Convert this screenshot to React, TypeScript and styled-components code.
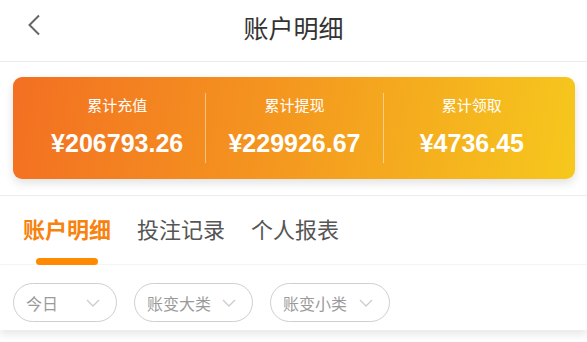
import { createGlobalStyle } from "styled-components";
import styled from "styled-components";

const GlobalStyle = createGlobalStyle`
    html, body {
        margin: 0;
        padding: 0;
        background: #ffffff;
        font-family: "Liberation Sans", "Noto Sans CJK SC", sans-serif;
    }
    * {
        box-sizing: border-box;
    }
`;

const Page = styled.div`
    width: 587px;
    background: #fff;
`;

const TopBar = styled.header`
    position: relative;
    height: 62px;
    display: flex;
    align-items: center;
    justify-content: center;
    border-bottom: 1px solid #ececec;
`;

const BackButton = styled.button`
    position: absolute;
    left: 22px;
    top: 12px;
    width: 24px;
    height: 26px;
    padding: 0;
    border: none;
    background: none;
    display: flex;
    align-items: center;
    justify-content: center;
`;

const Title = styled.h1`
    margin: 0 0 8px;
    font-size: 25px;
    font-weight: 400;
    color: #333;
    font-family: "Noto Sans CJK SC", sans-serif;
`;

const CardSection = styled.section`
    padding: 15px 12px 16px 13px;
    border-bottom: 1px solid #ececec;
`;

const SummaryCard = styled.div`
    display: grid;
    grid-template-columns: repeat(3, 1fr);
    padding: 16px 15px;
    border-radius: 9px;
    background: linear-gradient(100deg, #f36f22 0%, #f4951f 45%, #f6c81d 100%);
    box-shadow: 0 4px 10px rgba(0, 0, 0, 0.12);
`;

const Stat = styled.div<{ $divider?: boolean }>`
    height: 70px;
    display: flex;
    flex-direction: column;
    align-items: center;
    border-left: ${(p) => (p.$divider ? "1px solid rgba(255, 255, 255, 0.45)" : "1px solid transparent")};
    color: #fff;
`;

const StatLabel = styled.span`
    font-family: "Noto Sans CJK SC", sans-serif;
    font-size: 15px;
    line-height: 24px;
`;

const StatValue = styled.span`
    font-family: "Liberation Sans", sans-serif;
    font-weight: 700;
    font-size: 25px;
    line-height: 36px;
    margin-top: 8px;
`;

const TabBar = styled.nav`
    height: 69px;
    display: flex;
    align-items: center;
    padding: 0 10px;
    border-bottom: 1px solid #f6f6f6;
`;

const Tab = styled.div<{ $active?: boolean }>`
    position: relative;
    height: 100%;
    display: flex;
    align-items: center;
    padding: 0 13px 4px;
    font-family: "Noto Sans CJK SC", sans-serif;
    font-size: 22px;
    font-weight: ${(p) => (p.$active ? 700 : 400)};
    color: ${(p) => (p.$active ? "#f7820e" : "#555")};

    &::after {
        content: "";
        display: ${(p) => (p.$active ? "block" : "none")};
        position: absolute;
        left: 50%;
        bottom: -1px;
        width: 62px;
        height: 7px;
        margin-left: -31px;
        border-radius: 4px;
        background: #ff8a00;
    }
`;

const FilterRow = styled.div`
    display: flex;
    gap: 17px;
    padding: 18px 13px 8px;
    box-shadow: 0 5px 8px rgba(0, 0, 0, 0.09);
`;

const FilterPill = styled.div<{ $width: number }>`
    width: ${(p) => p.$width}px;
    height: 39px;
    display: flex;
    align-items: center;
    justify-content: space-between;
    padding: 0 16px 0 12px;
    border: 1px solid #cfcfcf;
    border-radius: 20px;
    font-family: "Noto Sans CJK SC", sans-serif;
    font-size: 16px;
    color: #9a9a9a;
`;

const Bottom = styled.div`
    height: 12px;
`;

function Chevron() {
    return (
        <svg width="14" height="8" viewBox="0 0 14 8" fill="none">
            <path d="M1 1l6 6 6-6" stroke="#cccccc" strokeWidth="1.3" />
        </svg>
    );
}

const stats = [
    { label: "累计充值", value: "¥206793.26" },
    { label: "累计提现", value: "¥229926.67" },
    { label: "累计领取", value: "¥4736.45" },
];

const filters = [
    { label: "今日", width: 104 },
    { label: "账变大类", width: 119 },
    { label: "账变小类", width: 120 },
];

export default function App() {
    return (
        <Page>
            <GlobalStyle />
            <TopBar>
                <BackButton aria-label="back">
                    <svg width="14" height="22" viewBox="0 0 14 22" fill="none">
                        <path d="M12 1.5L2.5 11l9.5 9.5" stroke="#666" strokeWidth="2" />
                    </svg>
                </BackButton>
                <Title>账户明细</Title>
            </TopBar>
            <CardSection>
                <SummaryCard>
                    {stats.map((s, i) => (
                        <Stat key={s.label} $divider={i > 0}>
                            <StatLabel>{s.label}</StatLabel>
                            <StatValue>{s.value}</StatValue>
                        </Stat>
                    ))}
                </SummaryCard>
            </CardSection>
            <TabBar>
                <Tab $active>账户明细</Tab>
                <Tab>投注记录</Tab>
                <Tab>个人报表</Tab>
            </TabBar>
            <FilterRow>
                {filters.map((f) => (
                    <FilterPill key={f.label} $width={f.width}>
                        <span>{f.label}</span>
                        <Chevron />
                    </FilterPill>
                ))}
            </FilterRow>
            <Bottom />
        </Page>
    );
}
